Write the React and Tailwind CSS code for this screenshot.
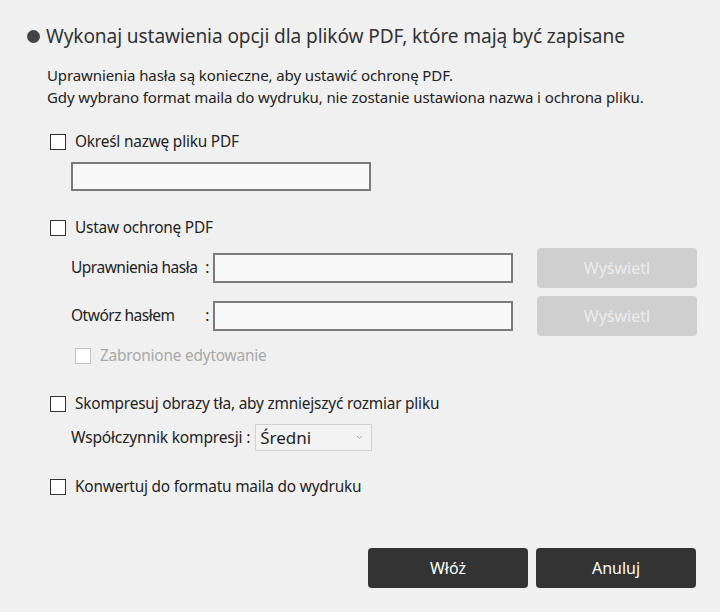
import React from 'react';

const font = { fontFamily: '"Noto Sans", "Open Sans", sans-serif' };

const Box = ({ disabled }) => (
    <span className={`w-4 h-4 shrink-0 border bg-white ${disabled ? 'border-[#c4c4c4] bg-[#f4f4f4]' : 'border-[#333]'}`} />
);

const Check = ({ label, disabled, className = '' }) => (
    <label className={`flex items-center gap-[9px] h-5 ${className}`}>
        <Box disabled={disabled} />
        <span className={`text-[15.4px] tracking-[-0.2px] ${disabled ? 'text-[#a8a8a8]' : 'text-[#222]'}`}>{label}</span>
    </label>
);

const PasswordRow = ({ label, className = '' }) => (
    <div className={`flex items-center h-10 pl-[71px] ${className}`}>
        <span className="w-[142px] flex justify-between text-[15.5px] tracking-[-0.5px] text-[#222] pr-[4px]">
            <span>{label}</span>
            <span>:</span>
        </span>
        <input type="password" className="w-[300px] h-[30px] border-2 border-[#7a7a7a] bg-[#f9f9f9] outline-none" />
        <button className="ml-[24px] w-[160px] h-10 rounded-[4px] bg-[#cfcfcf] text-[#ececec] text-[16px]">Wyświetl</button>
    </div>
);

export default function App() {
    return (
        <div className="w-[720px] h-[612px] bg-[#f0f0f0] flex flex-col" style={font}>
            <div className="flex items-center h-[26px] mt-[23px] pl-[27px] gap-[6px]">
                <span className="w-[13px] h-[13px] rounded-full bg-[#444]" />
                <h1 className="text-[19.1px] text-[#333] tracking-[-0.1px]">Wykonaj ustawienia opcji dla plików PDF, które mają być zapisane</h1>
            </div>

            <div className="mt-[15px] pl-[47px] text-[15px] leading-[22px] text-[#222] tracking-[-0.1px]">
                <p>Uprawnienia hasła są konieczne, aby ustawić ochronę PDF.</p>
                <p>Gdy wybrano format maila do wydruku, nie zostanie ustawiona nazwa i ochrona pliku.</p>
            </div>

            <Check label="Określ nazwę pliku PDF" className="mt-[24px] ml-[50px]" />
            <input type="text" className="mt-[10px] ml-[71px] w-[300px] h-[29px] border-2 border-[#7a7a7a] bg-[#f9f9f9] outline-none" />

            <Check label="Ustaw ochronę PDF" className="mt-[27px] ml-[50px]" />
            <PasswordRow label="Uprawnienia hasła" className="mt-[10px]" />
            <PasswordRow label="Otwórz hasłem" className="mt-[8px]" />
            <Check label="Zabronione edytowanie" disabled className="mt-[10px] ml-[75px]" />

            <Check label="Skompresuj obrazy tła, aby zmniejszyć rozmiar pliku" className="mt-[28px] ml-[50px]" />
            <div className="mt-[10px] ml-[71px] flex items-center h-[27px] gap-[5px]">
                <span className="text-[15.6px] tracking-[-0.2px] text-[#222]">Współczynnik kompresji :</span>
                <div className="w-[117px] h-[27px] border border-[#d2d2d2] bg-[#f3f3f3] flex items-center justify-between pl-[4px] pr-[8px]">
                    <span className="text-[17px] text-[#222]">Średni</span>
                    <svg width="7" height="5" viewBox="0 0 7 5" fill="none" stroke="#b0b0b0" strokeWidth="1"><path d="M1 1l2.5 2.5L6 1" /></svg>
                </div>
            </div>

            <Check label="Konwertuj do formatu maila do wydruku" className="mt-[26px] ml-[50px]" />

            <div className="mt-auto mb-[24px] flex justify-end gap-[8px] pr-[24px]">
                <button className="w-[160px] h-10 rounded-[4px] bg-[#333] text-white text-[16px]">Włóż</button>
                <button className="w-[160px] h-10 rounded-[4px] bg-[#333] text-white text-[16px]">Anuluj</button>
            </div>
        </div>
    );
}
